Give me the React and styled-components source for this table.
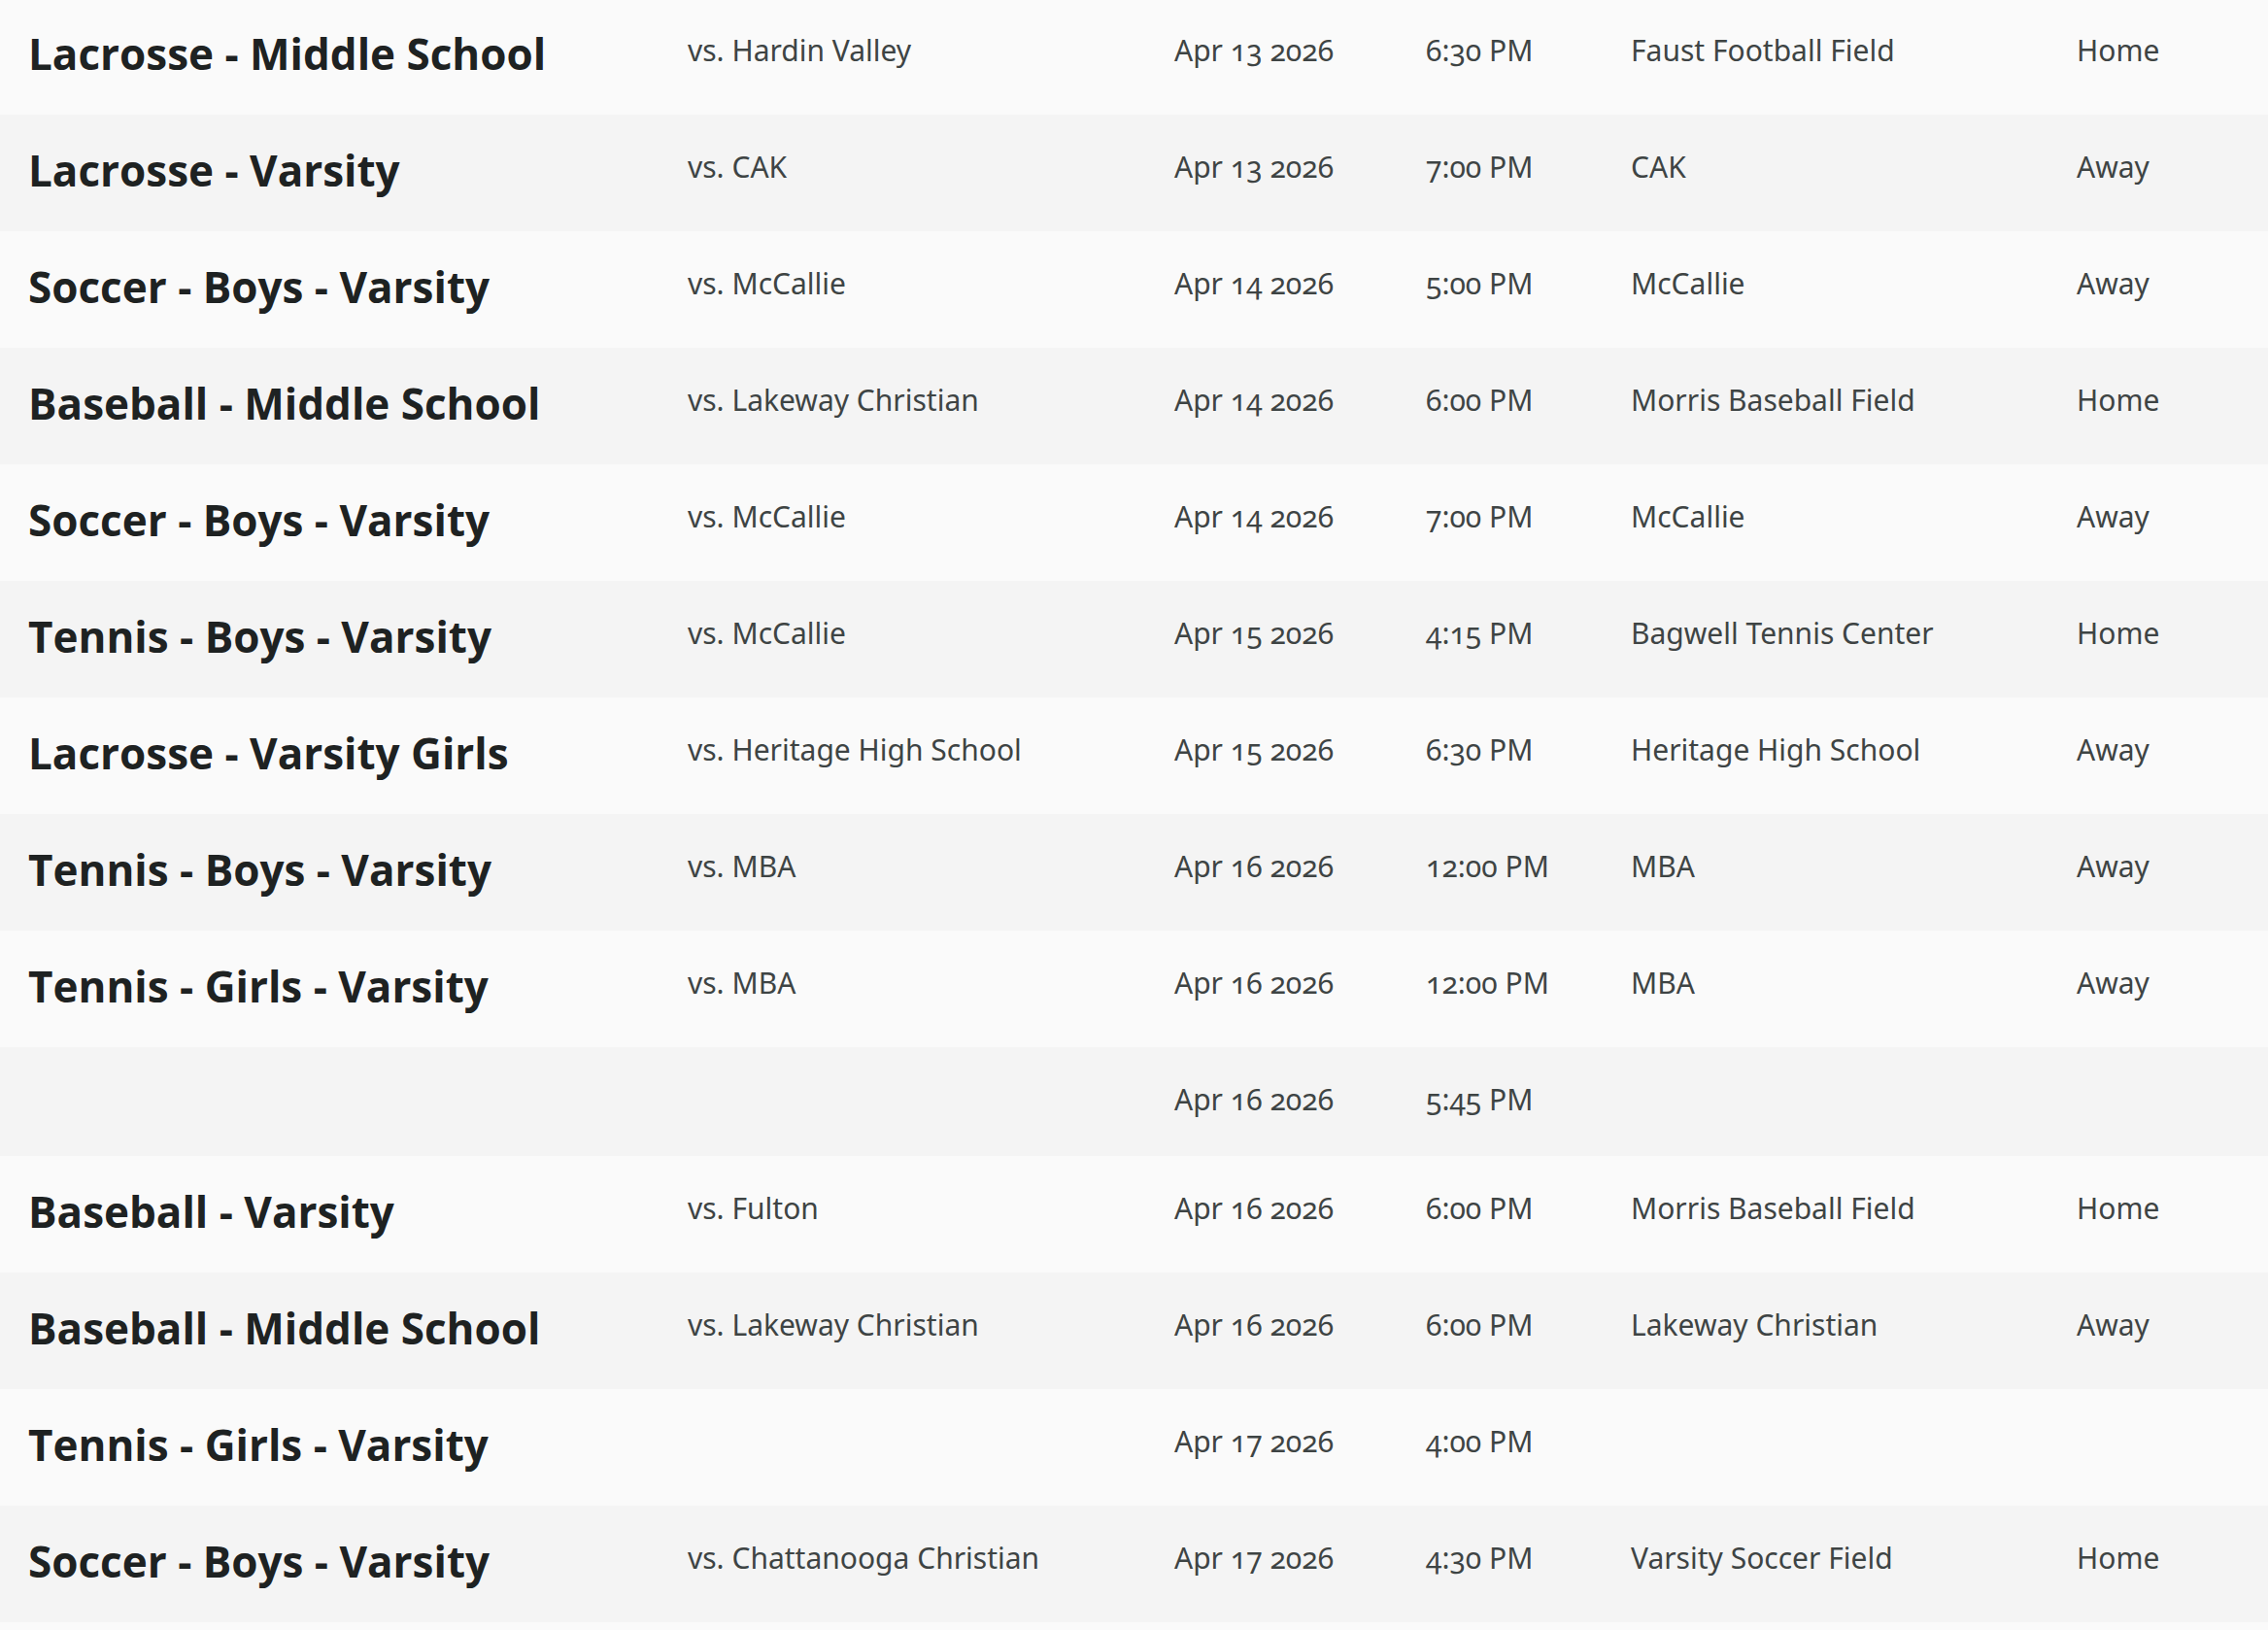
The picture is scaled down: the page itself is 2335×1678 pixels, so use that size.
import React from "react";
import styled, { createGlobalStyle } from "styled-components";

const GlobalStyle = createGlobalStyle`
  html, body {
    margin: 0;
    padding: 0;
    background: #fafafa;
  }
  body {
    font-family: "Noto Sans", "Open Sans", sans-serif;
  }
`;

const Schedule = styled.div`
  display: flex;
  flex-direction: column;
  margin-top: -2px;
`;

const Row = styled.div`
  display: grid;
  grid-template-columns: 679px 501px 259px 211px 459px 1fr;
  align-items: start;
  padding-left: 29px;
  background: ${(p) => (p.$alt ? "#f4f4f4" : "#fafafa")};
`;

const Title = styled.div`
  font-family: "Open Sans", "Noto Sans", sans-serif;
  font-weight: 700;
  font-size: 44px;
  line-height: 58px;
  color: #1e2222;
  padding: 28px 0 34px;
  white-space: nowrap;
`;

const Cell = styled.div`
  font-family: "Noto Sans", "Open Sans", sans-serif;
  font-weight: 400;
  font-size: 30px;
  line-height: 40px;
  color: #3e4444;
  padding: 34px 0 38px;
  font-variant-numeric: oldstyle-nums;
  white-space: nowrap;
  min-height: 40px;
`;

const games = [
  ["Lacrosse - Middle School", "vs. Hardin Valley", "Apr 13 2026", "6:30 PM", "Faust Football Field", "Home"],
  ["Lacrosse - Varsity", "vs. CAK", "Apr 13 2026", "7:00 PM", "CAK", "Away"],
  ["Soccer - Boys - Varsity", "vs. McCallie", "Apr 14 2026", "5:00 PM", "McCallie", "Away"],
  ["Baseball - Middle School", "vs. Lakeway Christian", "Apr 14 2026", "6:00 PM", "Morris Baseball Field", "Home"],
  ["Soccer - Boys - Varsity", "vs. McCallie", "Apr 14 2026", "7:00 PM", "McCallie", "Away"],
  ["Tennis - Boys - Varsity", "vs. McCallie", "Apr 15 2026", "4:15 PM", "Bagwell Tennis Center", "Home"],
  ["Lacrosse - Varsity Girls", "vs. Heritage High School", "Apr 15 2026", "6:30 PM", "Heritage High School", "Away"],
  ["Tennis - Boys - Varsity", "vs. MBA", "Apr 16 2026", "12:00 PM", "MBA", "Away"],
  ["Tennis - Girls - Varsity", "vs. MBA", "Apr 16 2026", "12:00 PM", "MBA", "Away"],
  ["", "", "Apr 16 2026", "5:45 PM", "", ""],
  ["Baseball - Varsity", "vs. Fulton", "Apr 16 2026", "6:00 PM", "Morris Baseball Field", "Home"],
  ["Baseball - Middle School", "vs. Lakeway Christian", "Apr 16 2026", "6:00 PM", "Lakeway Christian", "Away"],
  ["Tennis - Girls - Varsity", "", "Apr 17 2026", "4:00 PM", "", ""],
  ["Soccer - Boys - Varsity", "vs. Chattanooga Christian", "Apr 17 2026", "4:30 PM", "Varsity Soccer Field", "Home"],
];

export default function App() {
  return (
    <>
      <GlobalStyle />
      <Schedule>
        {games.map(([title, opp, date, time, loc, ha], i) => (
          <Row key={i} $alt={i % 2 === 1}>
            {title ? <Title>{title}</Title> : <div />}
            <Cell>{opp}</Cell>
            <Cell>{date}</Cell>
            <Cell>{time}</Cell>
            <Cell>{loc}</Cell>
            <Cell>{ha}</Cell>
          </Row>
        ))}
      </Schedule>
    </>
  );
}
